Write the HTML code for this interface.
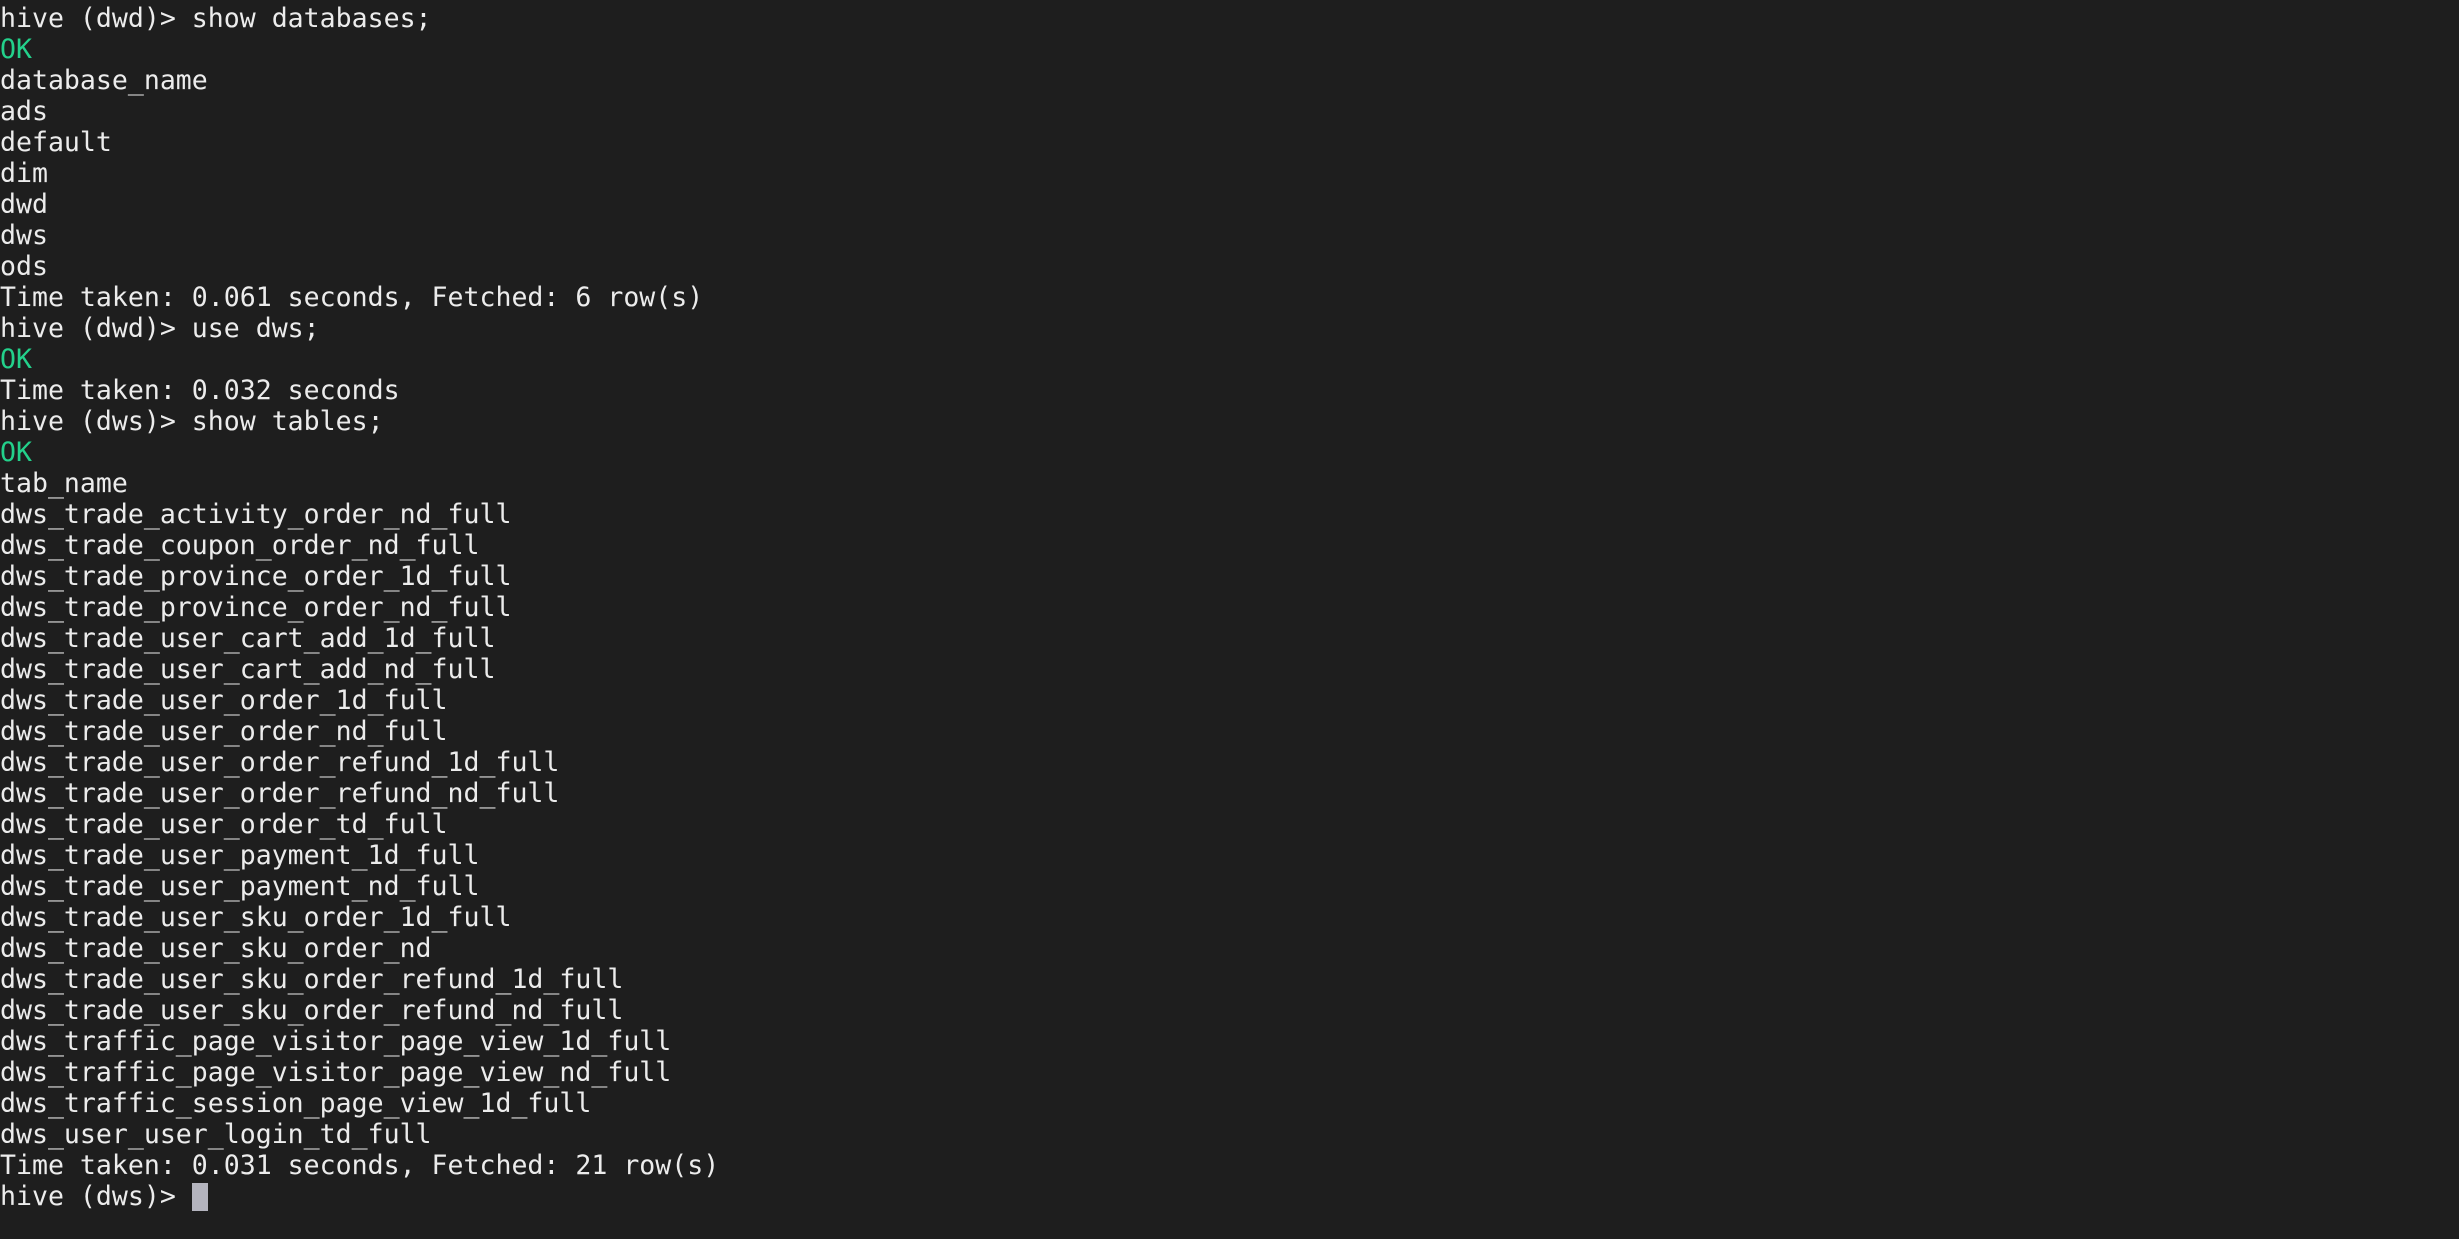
<!DOCTYPE html>
<html><head><meta charset="utf-8"><style>
html,body{margin:0;padding:0;background:#1e1e1e;width:2459px;height:1239px;overflow:hidden}
pre{margin:0;padding:3px 0 0 0;font-family:"DejaVu Sans Mono","Liberation Mono",monospace;font-size:26.55px;line-height:31px;color:#ececec;white-space:pre}
.g{color:#23d18b}
.c{display:inline-block;width:16px;height:28px;background:#b4b4be;vertical-align:-6px}
</style></head><body><pre>hive (dwd)&gt; show databases;
<span class="g">OK</span>
database_name
ads
default
dim
dwd
dws
ods
Time taken: 0.061 seconds, Fetched: 6 row(s)
hive (dwd)&gt; use dws;
<span class="g">OK</span>
Time taken: 0.032 seconds
hive (dws)&gt; show tables;
<span class="g">OK</span>
tab_name
dws_trade_activity_order_nd_full
dws_trade_coupon_order_nd_full
dws_trade_province_order_1d_full
dws_trade_province_order_nd_full
dws_trade_user_cart_add_1d_full
dws_trade_user_cart_add_nd_full
dws_trade_user_order_1d_full
dws_trade_user_order_nd_full
dws_trade_user_order_refund_1d_full
dws_trade_user_order_refund_nd_full
dws_trade_user_order_td_full
dws_trade_user_payment_1d_full
dws_trade_user_payment_nd_full
dws_trade_user_sku_order_1d_full
dws_trade_user_sku_order_nd
dws_trade_user_sku_order_refund_1d_full
dws_trade_user_sku_order_refund_nd_full
dws_traffic_page_visitor_page_view_1d_full
dws_traffic_page_visitor_page_view_nd_full
dws_traffic_session_page_view_1d_full
dws_user_user_login_td_full
Time taken: 0.031 seconds, Fetched: 21 row(s)
hive (dws)&gt; <span class="c"></span></pre></body></html>
